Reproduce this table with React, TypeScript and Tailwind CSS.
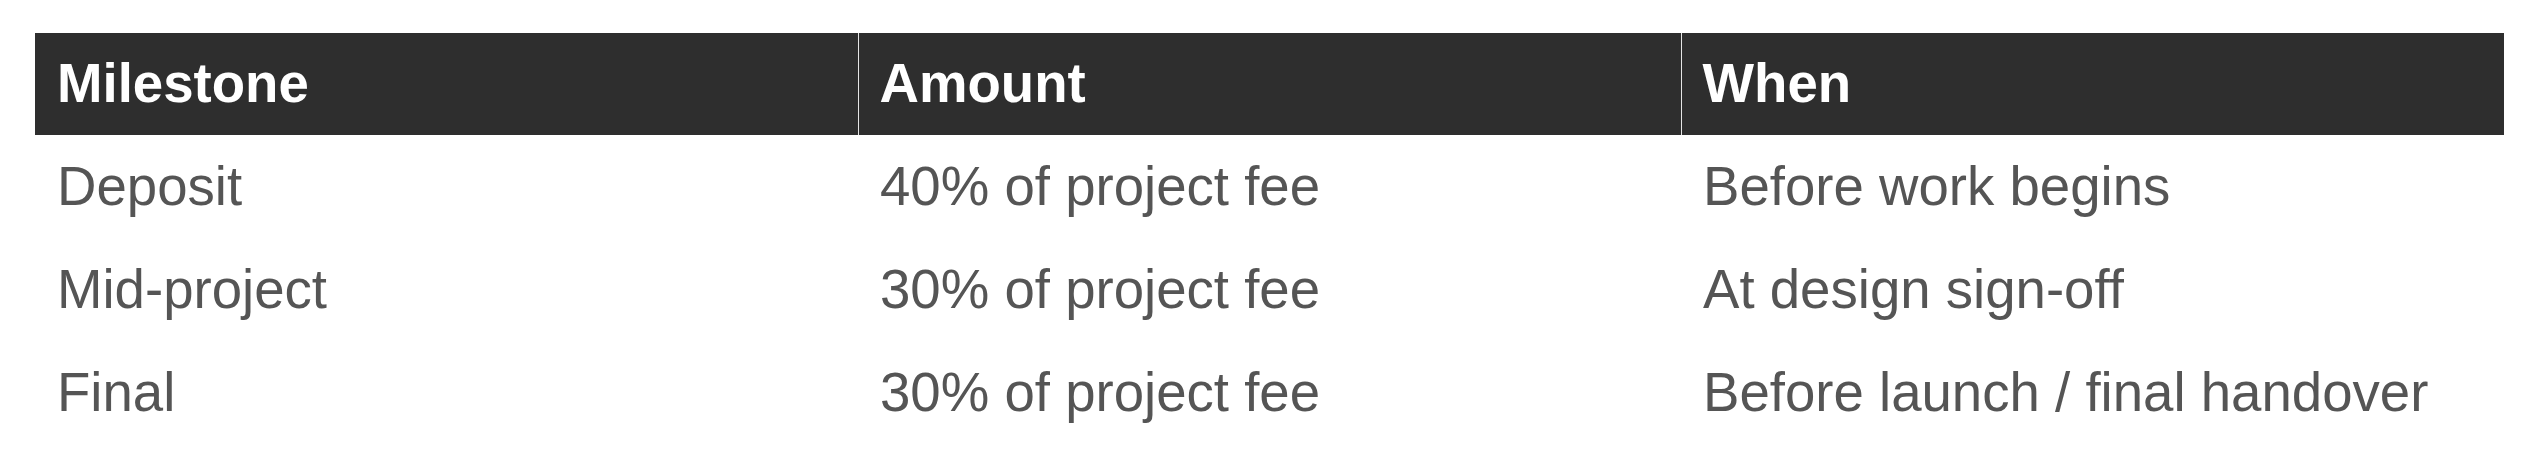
const rows = [
  { milestone: "Deposit", amount: "40% of project fee", when: "Before work begins" },
  { milestone: "Mid-project", amount: "30% of project fee", when: "At design sign-off" },
  { milestone: "Final", amount: "30% of project fee", when: "Before launch / final handover" },
];

export default function App() {
  return (
    <div className="min-h-screen bg-white pt-[33px] pl-[35px] font-['Liberation_Sans',Arial,sans-serif]">
      <table className="w-[2469px] table-fixed border-collapse text-[54.6px]">
        <thead>
          <tr className="bg-[#2e2e2e] text-white">
            <th className="px-[22px] py-[19px] text-left font-bold leading-[64px]">Milestone</th>
            <th className="border-l border-[#e5e5e5] px-[21px] py-[19px] text-left font-bold leading-[64px]">
              Amount
            </th>
            <th className="border-l border-[#e5e5e5] px-[21px] py-[19px] text-left font-bold leading-[64px]">
              When
            </th>
          </tr>
        </thead>
        <tbody className="text-[#555555]">
          {rows.map((r) => (
            <tr key={r.milestone}>
              <td className="px-[22px] py-[19px] leading-[65px]">{r.milestone}</td>
              <td className="px-[22px] py-[19px] leading-[65px]">{r.amount}</td>
              <td className="px-[22px] py-[19px] leading-[65px]">{r.when}</td>
            </tr>
          ))}
        </tbody>
      </table>
    </div>
  );
}
